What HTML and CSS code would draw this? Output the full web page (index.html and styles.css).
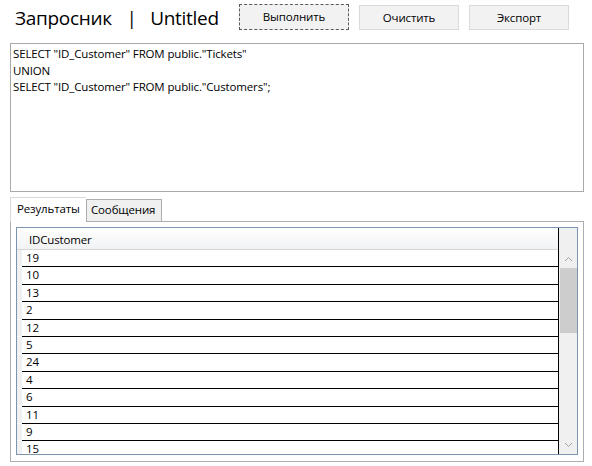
FILE: index.html
```html
<!DOCTYPE html>
<html lang="ru">
<head>
<meta charset="utf-8">
<title>Запросник</title>
<link rel="stylesheet" href="styles.css">
</head>
<body>
<div class="app">
  <div class="toolbar">
    <div class="title">Запросник <span class="sep">|</span> Untitled</div>
    <div class="buttons">
      <button class="btn btn-focus">Выполнить</button>
      <button class="btn">Очистить</button>
      <button class="btn">Экспорт</button>
    </div>
  </div>
  <div class="editor">SELECT "ID_Customer" FROM public."Tickets"
UNION
SELECT "ID_Customer" FROM public."Customers";</div>
  <div class="tabs">
    <div class="tabstrip">
      <div class="tab tab-active">Результаты</div>
      <div class="tab">Сообщения</div>
    </div>
    <div class="panel">
      <div class="grid">
        <div class="table">
          <div class="hrow"><div class="rh rh-head"></div><div class="hcell">IDCustomer</div></div>
          <div class="row"><div class="rh"></div><div class="cell">19</div></div>
          <div class="row"><div class="rh"></div><div class="cell">10</div></div>
          <div class="row"><div class="rh"></div><div class="cell">13</div></div>
          <div class="row"><div class="rh"></div><div class="cell">2</div></div>
          <div class="row"><div class="rh"></div><div class="cell">12</div></div>
          <div class="row"><div class="rh"></div><div class="cell">5</div></div>
          <div class="row"><div class="rh"></div><div class="cell">24</div></div>
          <div class="row"><div class="rh"></div><div class="cell">4</div></div>
          <div class="row"><div class="rh"></div><div class="cell">6</div></div>
          <div class="row"><div class="rh"></div><div class="cell">11</div></div>
          <div class="row"><div class="rh"></div><div class="cell">9</div></div>
          <div class="row"><div class="rh"></div><div class="cell">15</div></div>
        </div>
        <div class="vscroll">
          <div class="corner"></div>
          <div class="sbtn"><svg width="9" height="6" viewBox="0 0 9 6"><path d="M1 5 L4.5 1.5 L8 5" fill="none" stroke="#a3a3a3" stroke-width="1"/></svg></div>
          <div class="track"><div class="thumb"></div></div>
          <div class="sbtn"><svg width="9" height="6" viewBox="0 0 9 6"><path d="M1 1 L4.5 4.5 L8 1" fill="none" stroke="#a3a3a3" stroke-width="1"/></svg></div>
        </div>
      </div>
    </div>
  </div>
</div>
</body>
</html>
```
FILE: styles.css
```css
html, body {
  margin: 0;
  padding: 0;
  background: #ffffff;
}
body {
  font-family: "Open Sans", "Noto Sans", sans-serif;
  font-size: 11.5px;
  letter-spacing: -0.15px;
  color: #000;
  width: 592px;
  height: 466px;
  overflow: hidden;
}
.app {
  display: flex;
  flex-direction: column;
  padding-left: 10px;
  padding-right: 8px;
}
.toolbar {
  display: flex;
  align-items: flex-start;
  height: 43px;
}
.title {
  width: 224px;
  margin-left: 5px;
  font-size: 19px;
  line-height: 24px;
  padding-top: 6px;
  color: #000;
  letter-spacing: -0.3px;
}
.sep {
  margin: 0 9px 0 10px;
}
.buttons {
  display: flex;
  gap: 10px;
  padding-top: 4px;
  align-items: flex-start;
}
.btn {
  font-family: "Open Sans", "Noto Sans", sans-serif;
  font-size: 11.5px;
  letter-spacing: -0.15px;
  height: 25px;
  width: 100px;
  margin-top: 1px;
  background: #f2f2f2;
  border: 1px solid #dadada;
  padding: 0;
  color: #000;
  line-height: 20px;
}
.btn-focus {
  width: 110px;
  height: 26px;
  margin-top: 0;
  border: 1px dashed #5a5a5a;
  background: #f2f2f2;
}
.editor {
  box-sizing: border-box;
  height: 149px;
  border: 1px solid #a9a9a9;
  padding: 2px 2px;
  white-space: pre;
  line-height: 16.5px;
}
.tabs {
  margin-top: 5px;
  display: flex;
  flex-direction: column;
}
.tabstrip {
  display: flex;
  align-items: flex-end;
  height: 24px;
  position: relative;
  z-index: 1;
}
.tab {
  box-sizing: border-box;
  height: 22px;
  width: 76px;
  border: 1px solid #adadad;
  border-bottom: none;
  background: #f0f0f0;
  padding-left: 4px;
  line-height: 20px;
  margin-bottom: 0;
}
.tab-active {
  height: 25px;
  margin-bottom: -1px;
  background: #fff;
  border-color: #d9d9d9;
  border-right: none;
  padding-left: 6px;
  line-height: 22px;
}
.panel {
  box-sizing: border-box;
  height: 241px;
  border: 1px solid #adadad;
  padding: 5px 5px 6px 5px;
}
.grid {
  box-sizing: border-box;
  height: 228px;
  border: 1px solid #7d94b0;
  display: flex;
  overflow: hidden;
}
.table {
  flex: 1;
  display: flex;
  flex-direction: column;
  border-right: 1px solid #000;
  overflow: hidden;
}
.hrow {
  display: flex;
  height: 22px;
  flex: none;
  box-sizing: border-box;
  border-bottom: 1px solid #d5d5d5;
  background: linear-gradient(#ffffff 0%, #fbfbfc 30%, #f1f2f4 100%);
}
.rh {
  width: 5px;
  flex: none;
  background: #f0f0f0;
  box-sizing: border-box;
  border-bottom: 1px solid #fafafa;
}
.rh-head {
  background: transparent;
  border: none;
}
.hcell {
  padding-left: 6px;
  line-height: 23px;
  flex: 1;
  border-left: 1px solid #f7f7f7;
}
.row {
  display: flex;
  height: 17.4px;
  flex: none;
  box-sizing: border-box;
}
.cell {
  flex: 1;
  border-bottom: 1px solid #000;
  padding-left: 4px;
  line-height: 16.5px;
}
.vscroll {
  width: 18px;
  flex: none;
  background: #f0f0f0;
  display: flex;
  flex-direction: column;
}
.corner {
  height: 22px;
  flex: none;
}
.sbtn {
  height: 18px;
  flex: none;
  display: flex;
  align-items: center;
  justify-content: center;
}
.track {
  flex: 1;
}
.thumb {
  height: 65px;
  margin-left: 1px;
  background: #cdcdcd;
}
```
